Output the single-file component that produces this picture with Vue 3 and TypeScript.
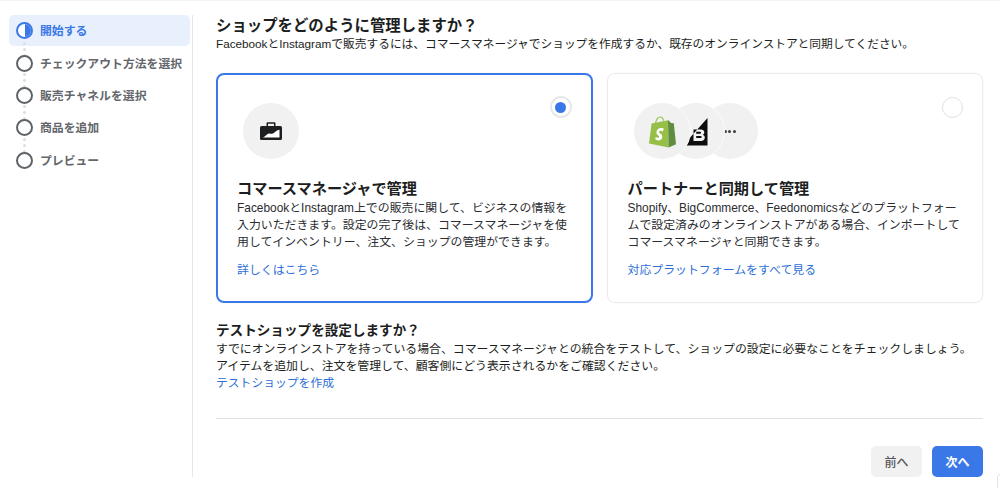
<script setup lang="ts">
interface Step { label: string; active?: boolean }
const steps: Step[] = [
  { label: '開始する', active: true },
  { label: 'チェックアウト方法を選択' },
  { label: '販売チャネルを選択' },
  { label: '商品を追加' },
  { label: 'プレビュー' },
]
</script>

<template>
  <div class="page">
    <aside class="sidebar">
      <div v-for="(s, i) in steps" :key="s.label" class="step" :class="{ active: s.active }">
        <span class="ring"><span v-if="s.active" class="half"></span></span>
        <span class="label">{{ s.label }}</span>
        <span v-if="i < steps.length - 1" class="dots"><i></i><i></i><i></i></span>
      </div>
    </aside>
    <main class="main">
      <h1 class="title">ショップをどのように管理しますか？</h1>
      <p class="text intro">FacebookとInstagramで販売するには、コマースマネージャでショップを作成するか、既存のオンラインストアと同期してください。</p>
      <div class="cards">
        <section class="card selected">
          <span class="radio on"><span></span></span>
          <div class="icons">
            <span class="bubble">
              <svg width="22" height="18" viewBox="0 0 22 18">
                <path d="M6.500 5V1.600C6.500.8 7.100.3 7.800.3h6.400c.7 0 1.300.5 1.300 1.300V5H14V1.800H8V5z" fill="#1c1e21"/>
                <rect x="0" y="4" width="22" height="14" rx="1.600" fill="#1c1e21"/>
                <path d="M2.500 15.500c2.800-.4 4-3.800 6.600-4 2.200-.1 3.100 1 4.700-.4 1.300-1.100 2.700-2.900 5.700-3.300v7.700z" fill="#fff"/>
              </svg>
            </span>
          </div>
          <h2 class="card-title">コマースマネージャで管理</h2>
          <p class="card-text">FacebookとInstagram上での販売に関して、ビジネスの情報を入力いただきます。設定の完了後は、コマースマネージャを使用してインベントリー、注文、ショップの管理ができます。</p>
          <a class="link card-link">詳しくはこちら</a>
        </section>
        <section class="card">
          <span class="radio"></span>
          <div class="icons">
            <span class="bubble top">
              <svg width="28" height="32" viewBox="0 0 28 32">
                <path d="M20 4.200 3.600 7.600 1 27.400 20.600 31.400z" fill="#95bf47"/>
                <path d="M20 4.200c.5 0 .9.300 1 .5l2 2.300 2.800.3L28 28.200 20.600 31.400z" fill="#5e8e3e"/>
                <path d="M7.500 7c.8-3.400 2.800-6 5-6 1.600 0 2.600 1.400 3 3.600" fill="none" stroke="#95bf47" stroke-width="1.100"/>
                <path d="M15.800 12.400l-.9 3c-.8-.4-1.600-.6-2.400-.6-1.400 0-1.500.9-1.500 1.100 0 1.200 3.300 1.700 3.300 4.700 0 2.300-1.500 3.800-3.500 3.800-2.400 0-3.600-1.500-3.600-1.500l.7-2.200s1.200 1.100 2.300 1.100c.7 0 1-.6 1-1 0-1.600-2.700-1.700-2.700-4.400 0-2.300 1.600-4.500 4.900-4.500 1.300 0 2.400.5 2.400.5z" fill="#fff"/>
              </svg>
            </span>
            <span class="bubble mid">
              <svg width="25" height="28" viewBox="0 0 25 28">
                <path fill-rule="evenodd" d="M24.500 0v27.500H0zM10.500 11.500v11.500h7.500c2.300 0 3.800-1.400 3.800-3.300 0-1.500-.9-2.500-2-2.900 1-.5 1.500-1.400 1.500-2.500 0-1.700-1.400-2.800-3.500-2.800z" fill="#0d0d0d"/>
                <path d="M13.200 13.800h3.600c.8 0 1.200.4 1.200 1s-.4 1-1.200 1h-3.600zM13.200 18h4.100c.9 0 1.400.4 1.400 1s-.5 1-1.400 1h-4.100z" fill="#0d0d0d"/>
              </svg>
            </span>
            <span class="bubble last">
              <span class="more"><i></i><i></i><i></i></span>
            </span>
          </div>
          <h2 class="card-title">パートナーと同期して管理</h2>
          <p class="card-text">Shopify、BigCommerce、Feedonomicsなどのプラットフォームで設定済みのオンラインストアがある場合、インポートしてコマースマネージャと同期できます。</p>
          <a class="link card-link">対応プラットフォームをすべて見る</a>
        </section>
      </div>
      <h2 class="test-title">テストショップを設定しますか？</h2>
      <p class="text test-text">すでにオンラインストアを持っている場合、コマースマネージャとの統合をテストして、ショップの設定に必要なことをチェックしましょう。<br>アイテムを追加し、注文を管理して、顧客側にどう表示されるかをご確認ください。</p>
      <a class="link test-link">テストショップを作成</a>
      <hr class="rule">
      <footer class="actions">
        <button class="btn prev">前へ</button>
        <button class="btn next">次へ</button>
      </footer>
    </main>
    <span class="corner"></span>
  </div>
</template>

<style>
html, body { margin: 0; background: #fff; }
</style>

<style scoped>
.page {
  position: relative;
  width: 1000px;
  height: 488px;
  box-sizing: border-box;
  padding-top: 14px;
  border-top: 1px solid #f4f4f4;
  display: flex;
  overflow: hidden;
  font-family: "Liberation Sans", "Noto Sans CJK JP", sans-serif;
  color: #1c1e21;
}
.corner {
  position: absolute;
  left: 997px;
  top: 473px;
  width: 10px;
  height: 20px;
  box-sizing: border-box;
  border: 1px solid #e3e4e6;
  border-radius: 3px;
}
.sidebar {
  width: 193px;
  height: 462px;
  box-sizing: border-box;
  padding-left: 9px;
  padding-right: 2px;
  border-right: 1px solid #e6e7e9;
  flex: none;
}
.step {
  position: relative;
  height: 32.300px;
  display: flex;
  align-items: center;
  padding-left: 7px;
  gap: 7px;
  box-sizing: border-box;
}
.step.active {
  height: 31px;
  margin-bottom: 1px;
  background: #e9f0fd;
  border-radius: 5px;
}
.ring {
  width: 17px;
  height: 17px;
  box-sizing: border-box;
  border: 2px solid #5f6368;
  border-radius: 50%;
  flex: none;
  overflow: hidden;
  display: flex;
  justify-content: flex-end;
}
.active .ring { border-color: #3b78e7; background: #fff; }
.half { width: 50%; height: 100%; background: #3b78e7; }
.label {
  font-size: 11.850px;
  font-weight: 700;
  color: #63666a;
  white-space: nowrap;
  margin-top: -2px;
}
.active .label { color: #3b78e7; }
.dots {
  position: absolute;
  left: 14px;
  top: 26px;
  display: flex;
  flex-direction: column;
  gap: 3px;
}
.active .dots { top: 27px; }
.dots i { width: 3px; height: 3px; border-radius: 50%; background: #dcdde0; }
.main {
  width: 767px;
  margin-left: 23px;
  flex: none;
}
.title {
  margin: 2px 0 0;
  font-size: 15.400px;
  line-height: 18px;
  font-weight: 700;
}
.text {
  margin: 0;
  font-size: 11.880px;
  line-height: 17px;
}
.text.intro { margin-top: 0; font-size: 11.720px; }
.cards {
  display: flex;
  gap: 14px;
  margin-top: 21px;
}
.card {
  position: relative;
  width: 376.500px;
  height: 230px;
  box-sizing: border-box;
  padding: 29px 20px 0 20px;
  border: 1px solid #eaebed;
  border-radius: 8px;
  box-shadow: 0 0 2px rgba(0, 0, 0, 0.05);
}
.card.selected {
  border: 2px solid #3b78e7;
  padding: 28px 19px 0 19px;
}
.radio {
  position: absolute;
  top: 23px;
  right: 19px;
  width: 21px;
  height: 21px;
  box-sizing: border-box;
  border: 1px solid #e0e1e3;
  border-radius: 50%;
  display: flex;
  align-items: center;
  justify-content: center;
}
.radio.on { top: 21px; right: 19px; width: 22px; height: 22px; border-width: 2px; border-color: #e7e8ea; }
.radio.on span { width: 11px; height: 11px; border-radius: 50%; background: #3b78e7; }
.icons {
  display: flex;
  height: 56px;
  padding-left: 6px;
}
.bubble {
  width: 56px;
  height: 56px;
  border-radius: 50%;
  background: #f1f1f2;
  display: flex;
  align-items: center;
  justify-content: center;
  flex: none;
}
.bubble.top { position: relative; z-index: 3; box-shadow: 1px 0 0 #fafafa; }
.bubble.top svg { margin-top: 1px; }
.bubble.mid { position: relative; z-index: 2; margin-left: -22px; box-shadow: 1px 0 0 #fafafa; }
.bubble.mid svg { margin-top: 1px; }
.bubble.last { margin-left: -22px; position: relative; z-index: 1; }
.more { display: flex; gap: 1.500px; }
.more i { width: 3px; height: 3px; border-radius: 50%; background: #3c3f44; }
.card-title {
  margin: 20px 0 0;
  font-size: 15.200px;
  line-height: 20px;
  font-weight: 700;
}
.card-text {
  margin: 0;
  max-width: 336px;
  font-size: 11.900px;
  line-height: 17px;
  padding-top: 1px;
  color: #2a2c30;
}
.link {
  display: block;
  color: #2f6fd8;
  font-size: 11.900px;
  line-height: 17px;
}
.card-link { margin-top: 11px; }
.test-title {
  margin: 19px 0 0;
  font-size: 13.600px;
  line-height: 18px;
  font-weight: 700;
}
.test-text { margin-top: 1px; }
.test-link { margin-top: 0; font-size: 11.800px; }
.rule {
  margin: 26px 0 0;
  width: 767px;
  border: 0;
  border-top: 1px solid #dfe0e2;
}
.actions {
  display: flex;
  justify-content: flex-end;
  gap: 10px;
  margin-top: 27px;
}
.btn {
  width: 51px;
  height: 31px;
  border: 0;
  border-radius: 5px;
  font-family: inherit;
  font-size: 12px;
  font-weight: 500;
  padding: 0;
}
.prev { background: #f1f1f2; color: #55585c; }
.next { background: #3b78e7; color: #fff; font-weight: 700; }
</style>
